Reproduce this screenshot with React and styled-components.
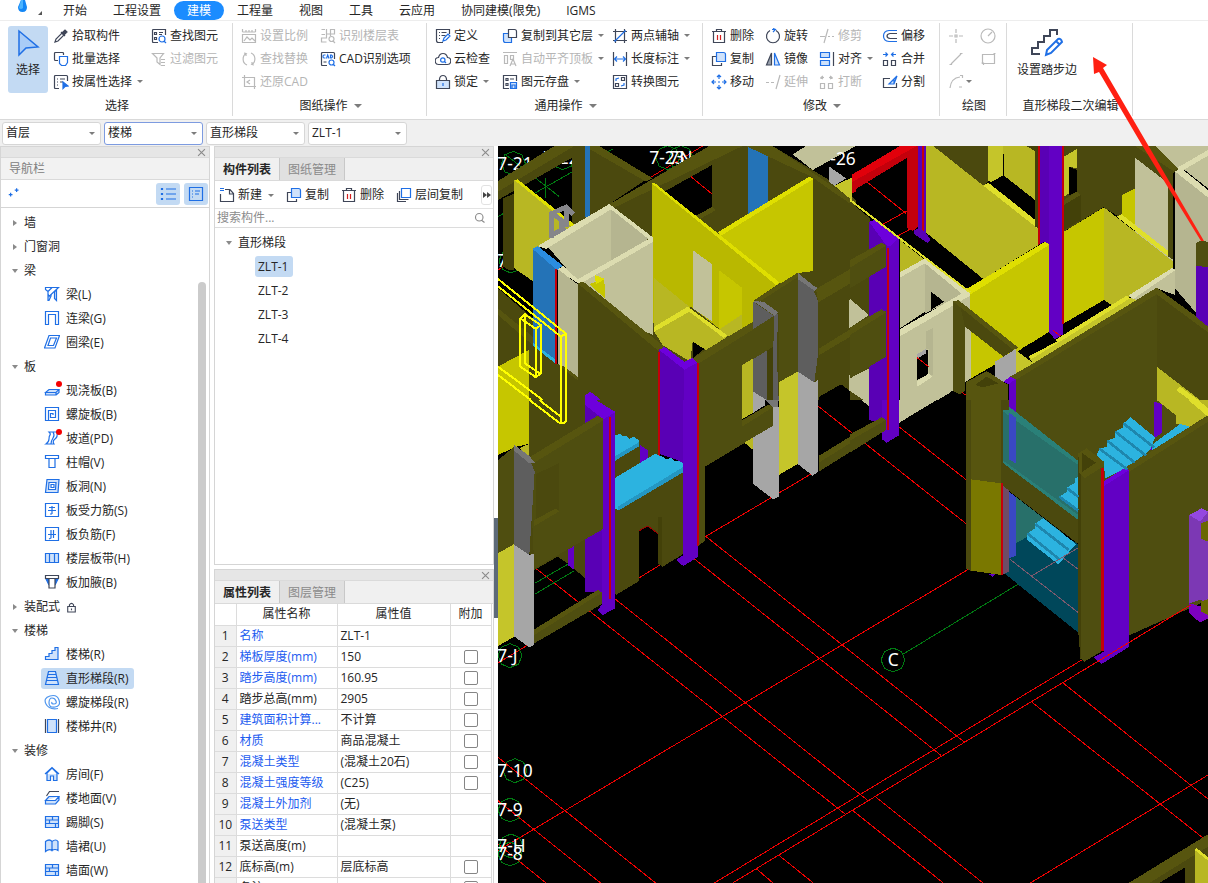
// App.jsx
import { useState } from 'react';
import styled, { createGlobalStyle } from 'styled-components';

const INK = '#3f4658';
const BLUE = '#1f6fe5';
const PALE = '#cfe2fb';
const OFF = '#b9b9b9';

const GlobalStyle = createGlobalStyle`
  * { box-sizing: border-box; }
  body {
    margin: 0;
    background: #fff;
    color: #262626;
    font-family: "Open Sans", "Noto Sans CJK SC", sans-serif;
    font-size: 12px;
    line-height: 16px;
  }
  button, input, select {
    font: inherit;
    color: inherit;
    margin: 0;
  }
  button {
    border: none;
    background: none;
    padding: 0;
    white-space: nowrap;
  }
`;

const Shell = styled.div`
  position: relative;
  height: 100vh;
  display: flex;
  flex-direction: column;
  overflow: hidden;
`;

/* ---------- menu ---------- */

const MenuBar = styled.nav`
  display: flex;
  align-items: flex-end;
  height: 21px;
  flex: none;
  border-bottom: 1px solid #ededed;
`;

const AppMark = styled.div`
  display: flex;
  align-items: flex-start;
  gap: 8px;
  width: 50px;
  height: 20px;
  padding-left: 16px;
`;

const MenuTab = styled.button`
  height: 19px;
  padding: 1px 13px 0;
  border-radius: 10px;
  background: ${(props) => (props.$active ? '#1b8cff' : 'none')};
  color: ${(props) => (props.$active ? '#fff' : '#262626')};
`;

/* ---------- ribbon ---------- */

const Ribbon = styled.div`
  display: flex;
  flex: none;
  height: 99px;
  padding-top: 2px;
  border-bottom: 1px solid #d9d9d9;
`;

const Group = styled.section`
  display: flex;
  flex-direction: column;
  flex: none;
  width: ${(props) => props.$w}px;
  height: 93px;
  padding: 1px 0 0 8px;
  border-right: 1px solid #dadada;
`;

const GroupBody = styled.div`
  display: flex;
  flex: 1;
`;

const GroupTitle = styled.div`
  display: flex;
  justify-content: center;
  align-items: center;
  gap: 4px;
  height: 20px;
  padding-right: 6px;
  white-space: nowrap;
`;

const ToolColumn = styled.div`
  display: flex;
  flex-direction: column;
  flex: none;
  width: ${(props) => props.$w}px;
`;

const Tool = styled.button`
  display: flex;
  align-items: center;
  gap: 3px;
  height: 23px;
  color: ${(props) => (props.disabled ? '#b5b5b5' : '#262626')};
`;

const Caret = styled.i`
  flex: none;
  border: ${(props) => (props.$large ? 4 : 3)}px solid transparent;
  border-top-color: #7c7c7c;
  border-bottom: none;
  margin-left: ${(props) => props.$gap || 2}px;
`;

const BigTool = styled.button`
  display: flex;
  flex-direction: column;
  align-items: center;
  gap: 5px;
  width: ${(props) => props.$w}px;
  height: 67px;
  margin: 2px 5px 0 0;
  padding-top: 3px;
  border-radius: 3px;
  background: ${(props) => (props.$active ? '#c3daf3' : 'none')};
`;

/* ---------- option row ---------- */

const OptionRow = styled.div`
  display: flex;
  align-items: center;
  gap: 3px;
  flex: none;
  height: 26px;
  padding-left: 2px;
  background: #f0f0f0;
`;

const SelectBox = styled.label`
  display: flex;
  align-items: center;
  width: 99px;
  height: 23px;
  padding-right: 5px;
  border: 1px solid ${(props) => (props.$focus ? '#7d9be0' : '#d6d6d6')};
  border-radius: 3px;
  background: #fff;

  select {
    appearance: none;
    flex: 1;
    min-width: 0;
    border: none;
    outline: none;
    background: none;
    padding: 0 3px;
  }
`;

/* ---------- panels ---------- */

const Workspace = styled.main`
  display: flex;
  flex: 1;
  min-height: 0;
`;

const NavPanel = styled.aside`
  display: flex;
  flex-direction: column;
  flex: none;
  width: 210px;
  margin-right: 4px;
  border: solid #d5d5d5;
  border-width: 1px 1px 0;
`;

const Strip = styled.div`
  display: flex;
  justify-content: flex-end;
  align-items: center;
  flex: none;
  height: 11px;
  padding-right: 2px;
  background: #e6e6e6;
  border-bottom: 1px solid #dadada;

  button { display: flex; }
`;

const NavTitle = styled.div`
  flex: none;
  height: 22px;
  padding: 3px 8px;
  background: #f2f2f2;
  border-bottom: 1px solid #dadada;
  color: #808080;
`;

const NavTools = styled.div`
  display: flex;
  align-items: center;
  gap: 4px;
  flex: none;
  height: 28px;
  padding: 0 1px 0 7px;
  border-bottom: 1px solid #d5d5d5;

  button:first-child { margin-right: auto; }
`;

const Toggle = styled.button`
  display: flex;
  align-items: center;
  justify-content: center;
  width: 24px;
  height: 22px;
  border-radius: 3px;
  background: #c3daf3;
`;

const NavBody = styled.div`
  display: flex;
  flex: 1;
  min-height: 0;
  padding: 3px 3px 0 0;
`;

const Tree = styled.ul`
  flex: 1;
  margin: 0;
  padding: 0;
  list-style: none;
  overflow: hidden;

  ul {
    margin: 0;
    padding: 0 0 0 40px;
    list-style: none;
  }

  li {
    display: flex;
    flex-direction: column;
    align-items: flex-start;
  }
`;

const ScrollThumb = styled.div`
  flex: none;
  width: 8px;
  margin-top: 71px;
  border-radius: 4px 4px 0 0;
  background: #cbcbcb;
`;

const Branch = styled.button`
  display: flex;
  align-items: center;
  gap: 6px;
  height: 24px;
  padding-left: ${(props) => props.$indent || 10}px;
`;

const Twist = styled.i`
  flex: none;
  width: 7px;
  display: flex;
  justify-content: center;

  &::after {
    content: '';
    border: 3px solid transparent;
    ${(props) =>
      props.$open
        ? 'border-top: 4px solid #8a8a8a; border-bottom: none;'
        : 'border-left: 4px solid #8a8a8a; border-right: none;'}
  }
`;

const Leaf = styled.button`
  display: flex;
  align-items: center;
  gap: 6px;
  height: 21px;
  margin: 1px 0 2px;
  padding: 0 5px 0 3px;
  border-radius: 3px;
  background: ${(props) => (props.$active ? '#c3daf3' : 'none')};
`;

const Side = styled.div`
  display: flex;
  flex-direction: column;
  flex: none;
  gap: 4px;
  width: 280px;
`;

const Panel = styled.section`
  display: flex;
  flex-direction: column;
  flex: ${(props) => (props.$fixed ? `0 0 ${props.$fixed}px` : '1 1 0')};
  min-height: 0;
  overflow: hidden;
  border: 1px solid #d5d5d5;
  border-bottom-width: ${(props) => (props.$fixed ? '1px' : '0')};
`;

const Tabs = styled.div`
  display: flex;
  flex: none;
  height: 23px;
  background: #f0f0f0;
  border-bottom: 1px solid #dadada;
`;

const PanelTab = styled.button`
  width: 65px;
  height: 22px;
  padding-top: 1px;
  border-right: 1px solid #c8c8c8;
  background: ${(props) => (props.$active ? '#f0f0f0' : '#e0e0e0')};
  color: ${(props) => (props.$active ? '#262626' : '#8a8a8a')};
  font-weight: ${(props) => (props.$active ? 700 : 400)};
`;

const ListTools = styled.div`
  display: flex;
  align-items: center;
  gap: 12px;
  flex: none;
  height: 28px;
  padding: 1px 1px 0 4px;
  border-bottom: 1px solid #e3e3e3;
`;

const MoreButton = styled.button`
  flex: none;
  width: 11px;
  height: 20px;
  margin-left: auto;
  border: 1px solid #e2e2e2;
  border-radius: 3px;
  display: flex;
  align-items: center;
  justify-content: center;
`;

const SearchRow = styled.label`
  display: flex;
  align-items: center;
  flex: none;
  height: 19px;
  padding: 0 7px 0 2px;
  border-bottom: 1px solid #dcdcdc;

  input {
    flex: 1;
    min-width: 0;
    padding: 0;
    border: none;
    outline: none;
    background: none;
  }
  input::placeholder { color: #8c8c8c; opacity: 1; }
`;

const PartList = styled(Tree)`
  padding-top: 3px;
`;

const Table = styled.table`
  table-layout: fixed;
  flex: none;
  width: 276px;
  border-collapse: collapse;

  th, td {
    height: 21px;
    padding: 0 3px;
    border: 1px solid #dcdcdc;
    border-top: none;
    font-weight: 400;
    text-align: left;
    line-height: 20px;
    white-space: nowrap;
    overflow: hidden;
    text-overflow: ellipsis;
  }
  thead th { text-align: center; }
  tbody th {
    padding: 0;
    background: #f0f0f0;
    text-align: center;
  }
  th:first-child { border-left: none; }
  td:last-child { text-align: center; }
`;

const PropName = styled.td`
  color: ${(props) => (props.$link ? '#1c5cf0' : '#262626')};
`;

const Check = styled.input`
  appearance: none;
  display: block;
  width: 14px;
  height: 14px;
  border: 1px solid #858585;
  border-radius: 2px;
  background: #fff;

  && { margin: 0 auto; }
`;

const Splitter = styled.div`
  flex: none;
  width: 4px;
  padding-top: 372px;

  button {
    display: block;
    width: 4px;
    height: 100px;
    background: #5d6a78;
  }
`;

const Viewport = styled.div`
  flex: 1;
  min-width: 0;
  background: #000;

  svg {
    display: block;
    width: 100%;
    height: 100%;
  }
`;

const Pointer = styled.svg`
  position: absolute;
  top: 50px;
  left: 1088px;
  pointer-events: none;
`;

/* ---------- icons: [path, stroke, fill] on a 16px grid ---------- */

const ICONS = {
  dropper: [['M2 14l1-3 6-6 2 2-6 6z', INK, '#fff'], ['M8 4l4 4M9 5l3-3 2 2-3 3z', INK, INK]],
  batch: [['M10.5 4V2.500q0-1-1-1h-7q-1 0-1 1v6q0 1 1 1H5', INK], ['M6.500 5.500h8v6l-2 3h-4l-2-2z', BLUE, '#fff']],
  byProp: [['M6 14.500H2.500q-1 0-1-1v-11q0-1 1-1h11q1 0 1 1V7M4 5h1M7 5h5M4 8h1M7 8h3M4 11h1', INK], ['M10 8l5 4-3 .500-2 2z', BLUE, BLUE]],
  find: [['M7 14.500H2.500q-1 0-1-1v-11q0-1 1-1h12V7M3.500 4.500h2v2h-2zM8 4.500h4M8 6.500h3M3.500 9.500h2v2h-2z', INK], ['M14 11a3 3 0 1 1-6 0 3 3 0 0 1 6 0M13 13l2 2', BLUE, '#fff']],
  filter: [['M1.500 2.500h11L9 7v6.500L6 11V7zM10 8.500h4M10 11.500h4M10 14.500h4', OFF]],
  scale: [['M1.500 1v3M5 2v2M8 2v2M11 2v2M14.500 1v3M1.500 4h13M1.500 6.500h13v8h-13zM3 13l3-4 3 3 2-2 3 3', OFF]],
  swap: [['M6 14C1 12 1 5 5 2.500L3 2M5 2.500L5 5M10 2c5 2 5 9 1 11.500l2 .500M11 13.500L11 11', OFF]],
  restore: [['M3.500 1v11.500H15M1 3.500h12.500V15M9 6L6 8l3 2', OFF]],
  floors: [['M5 1.500H1.500M5 6.500H1.500M6.500 1v9h-5v4h5M6.500 6h8V1.500h-4V8', OFF], ['M14 11a2.500 2.500 0 1 1-5 0 2.500 2.500 0 0 1 5 0M13 13l2 2', OFF]],
  cad: [['M7 14.500H2.500q-1 0-1-1v-11q0-1 1-1h11q1 0 1 1V8M3.500 11h3', INK], ['M5.500 4H4q-1 0-1 1.500T4 7h1.500M6.500 7.500l1.200-3.500L9 7.500M10.500 4v3h1q2-1.500 0-3zM14 11.500a2.500 2.500 0 1 1-5 0 2.500 2.500 0 0 1 5 0M13 13l2 2', BLUE]],
  define: [['M8 14.500H3.500q-2 0-2-2v-11h13V6M4 4.500h1M6.500 4.500h5M4 7.500h1M6.500 7.500h4M4 10.500h1', INK], ['M8 13l1-3 4-4 2 2-4 4z', BLUE, '#fff']],
  cloud: [['M4 13.500a3.500 3.500 0 0 1-.500-7Q4.500 2.500 8 2.500t4.500 4a3.500 3.500 0 0 1-.500 7z', INK], ['M10 9a2.200 2.200 0 1 1-4.400 0 2.200 2.200 0 0 1 4.400 0M9.500 10.500L11 12', BLUE]],
  lock: [['M4.500 6.500V5Q5 1.500 8 1.500T11.500 5v1.500', INK], ['M1.500 6.500h13v8h-13z', INK, PALE], ['M8 9v3', BLUE, BLUE]],
  copyTo: [['M1.500 5.500h8v9h-6q-2 0-2-2z', BLUE, PALE], ['M6.500 1.500h6q2 0 2 2v6h-8z', INK, '#fff']],
  alignTop: [['M1 1.500h14M2.500 4.500h3v8h-3zM8.500 4.500h3v4h-3zM8 15l3-7 3 7M9 13h4', OFF]],
  save: [['M7 14.500H1.500v-13h13V7M4 4.500h2v2H4zM4 9.500h2v2H4zM8 5h4', INK], ['M8.500 8.500h6v6h-6zM10 14v-3h3v3', BLUE, PALE]],
  axis: [['M3.500 1v14M12.500 1v14M1 3.500h14M1 12.500h14', INK], ['M3 13L13 3M2 13h2M12 3h2', BLUE]],
  measure: [['M1.500 1v14M14.500 1v14', INK], ['M2 8h12M5 5.500L2.500 8 5 10.500M11 5.500L13.500 8 11 10.500', BLUE]],
  convert: [['M1.500 1.500h13v13h-13zM9.500 3.500h3v3h-3zM3.500 9.500h3v3h-3z', INK], ['M7 4L4 5v2M9 12l3-1V9', BLUE]],
  trash: [['M1 3.500h14M2.500 4v10.500h11V4M5.500 3V1.500h5V3', INK], ['M6.500 7v5M9.500 7v5', '#d32020']],
  rotate: [['M5 2.500A6.500 6.500 0 1 0 11 2.500', INK], ['M7 1.500h3M8 .500l2.500 1L8 4', BLUE]],
  trim: [['M1 8.500h5M9 1L5 15M9 8.500h2M13 8.500h2', OFF]],
  offset: [['M15 2.500H7Q1.500 3 1.500 8T7 13.500h8', BLUE], ['M15 5.500H8Q5 6 5 8t3 2.500h7', INK]],
  copy: [['M5 5.500H1.500v9h9V12', INK], ['M5.500 1.500h7q2 0 2 2v7h-9z', BLUE, PALE]],
  mirror: [['M6.500 2v12h-5z', INK, '#9aa1ad'], ['M9.500 2v12h5z', BLUE, PALE]],
  align: [['M1.500 1.500h9v5h-9zM1.500 9.500h9v5h-9z', BLUE, PALE], ['M14.500 1v14', INK]],
  merge: [['M1.500 9.500h4v5h-4zM9.500 9.500h4v5h-4z', INK], ['M1 3.500h4M3.500 1.500l2 2-2 2M14 3.500h-4M11.500 1.500l-2 2 2 2', BLUE]],
  move: [['M8 1v4M8 11v4M1 8h4M11 8h4M6 3l2-2 2 2M6 13l2 2 2-2M3 6L1 8l2 2M13 6l2 2-2 2M7 8h2', BLUE]],
  extend: [['M1 8.500h3M6 8.500h3M15 1l-4 14', OFF]],
  breakUp: [['M1.500 9.500h4v5h-4zM9.500 9.500h4v5h-4zM2 5V3.500h3M4 2l-2 1.500L4 5M13 5V3.500h-3M11 2l2 1.500L11 5', OFF]],
  split: [['M8 4.500H1.500v9h13V9', INK], ['M15 2L7 10h5zM12 10v-5', BLUE, PALE]],
  point: [['M8 1v4M8 11v4M1 8h4M11 8h4M7 7h2v2H7z', OFF]],
  circle: [['M15 8A7 7 0 1 1 1 8a7 7 0 0 1 14 0M8 8l4-4', OFF]],
  line: [['M3 13L13 3M1.500 13.500h2v-1M14.500 2.500h-2v1', OFF]],
  rect: [['M2.500 3.500h12v9h-12zM1.500 12h2v2M13.500 2.500h2', OFF]],
  arc: [['M2 14Q3 4 12 3M12 1.500h2.500V4M11 13h3', OFF]],
  create: [['M6 2.500h5l3.500 4v8h-13V7M10.500 3v4H14', INK], ['M1 1.500h4M1 3.500h4', BLUE]],
  copyFloor: [['M1.500 6v8.500H10M3.500 4v8.500h9', INK], ['M5.500 1.500h9v9h-9z', BLUE, '#fff']],
  plus: [['M3.500 9v5M1 11.500h5M11.500 3v5M9 5.500h5', BLUE]],
  list: [['M1.500 2.500h1v1h-1zM1.500 7.500h1v1h-1zM1.500 12.500h1v1h-1zM6 3h10M6 8h10M6 13h10', BLUE]],
  card: [['M1.500 1.500h13v13h-13zM4 5h1M7 5h5M4 8h1M7 8h4M4 11h1', BLUE]],
  beam: [['M10.500 5.500l2-1v10l-2-2zM4 9l3-3v4l-2 4.500h-1z', BLUE, PALE], ['M1.500 1.500h13L5 10.500 4 8V5.500L1.500 3.500zM4 5.500l4-4', BLUE, '#fff']],
  linkBeam: [['M1.500 14.500v-13h13v13h-3v-10h-7v10z', BLUE]],
  ringBeam: [['M5 1.500h10.500L11 14H.500zM6.500 4h6L9.500 11.500H4z', BLUE, '#fff']],
  slab: [['M5 7.500h10l-3 3H1.500zM1.500 10.500v2.500H12v-2.500M12 13l3-2.500v-3', BLUE, PALE]],
  spiral: [['M1.500 14.500v-13h13v13zM4.500 14v-9.500h7v7h-5v-4h2.500v1.500', BLUE]],
  ramp: [['M5 2h8q1 5-2 7t-1 5H2q3-2 3-5t1-4-1-3z', BLUE, '#fff'], ['M9 2q2 3 0 6t-2 6', BLUE]],
  cap: [['M1.500 1.500h13v3h-3.500v9H5v-9H1.500zM4 4.500h8', BLUE]],
  hole: [['M3 1.500h12l-1 13H1.500z', BLUE, PALE], ['M5 4.500h7l-.500 7H4.500zM7 6.500h3v3H7z', BLUE, '#fff']],
  bar1: [['M1.500 1.500h13v13h-13zM5 5.500h6M4 8.500h8M8 4v8M6 12h2', BLUE]],
  bar2: [['M1.500 1.500h13v13h-13zM4 8.500h8M7 4v8l-2 1M9.500 4v8', BLUE]],
  strip: [['M1.500 3.500h13v9h-13zM5.500 4v8M10.500 4v8', BLUE, PALE]],
  haunch: [['M2 5l3 6V5zM14 5l-3 6V5z', BLUE, BLUE], ['M1.500 1.500h13v3h-13zM5 5v9h6V5', INK, '#fff']],
  stair: [['M1.500 13.500v-3h3.500V7.500h3V4.500h3v-3h3v12z', BLUE, PALE]],
  flight: [['M4.500 1.500h7l3 13h-13zM4 4.500h8M3.500 7.500h9M2.500 10.500h11', BLUE, PALE]],
  helix: [['M14 14.500Q5 16 2 10T6 2t9 4-4 7-6-4 3-5 4 3-2 3-2-2', '#4f96ee']],
  well: [['M1.500 1v14M14.500 1v14', INK], ['M3.500 1.500h9v13h-9z', BLUE, PALE]],
  house: [['M1 8l7-6.500L15 8M3 7v7.500h3.500V10h3v4.500H13V7L8 2z', BLUE, PALE]],
  floor: [['M2.500 6l3-4.500H15', INK], ['M5 6.500h10l-3.500 4H1.500zM1.500 10.500v3.500h10l3.500-4V6.500', BLUE, PALE]],
  brick: [['M1.500 2.500h13v11h-13z', BLUE, PALE], ['M1.500 6h13M1.500 9.500h13M8.500 2.500V6M5.500 6v3.500M11.500 9.500v4', BLUE]],
  skirt: [['M1.500 3.500q4-3 6.500 0v9q-3-2-6.500 1zM8 3.500q4-3 6 0v9q-3-2-6 0z', BLUE, PALE]],
  padlock: [['M2.500 6.500h11v8h-11zM5 6V4q3-4 6 0v2M8 9.500V12', INK]],
  search: [['M12 7A5 5 0 1 1 2 7a5 5 0 0 1 10 0M10 11l4 3', '#8a8a8a']],
  close: [['M3 3l10 10M13 3L3 13', '#8a8a8a']],
};

function Icon({ name, size = 16, width = 1.2 }) {
  return (
    <svg width={size} height={size} viewBox="0 0 16 16" fill="none" strokeWidth={width} style={{ flex: 'none' }} aria-hidden="true">
      {ICONS[name].map(([d, stroke, fill]) => (
        <path key={d} d={d} stroke={stroke} fill={fill || 'none'} />
      ))}
    </svg>
  );
}

/* ---------- data ---------- */

const MENU = ['开始', '工程设置', '建模', '工程量', '视图', '工具', '云应用', '协同建模(限免)', 'IGMS'];

// [icon, label, disabled, caret]
const GROUPS = [
  {
    title: '选择', w: 233, big: true,
    columns: [
      [98, [['dropper', '拾取构件'], ['batch', '批量选择'], ['byProp', '按属性选择', false, true]]],
      [80, [['find', '查找图元'], ['filter', '过滤图元', true]]],
    ],
  },
  {
    title: '图纸操作', w: 194, caret: true,
    columns: [
      [79, [['scale', '设置比例', true], ['swap', '查找替换', true], ['restore', '还原CAD', true]]],
      [100, [['floors', '识别楼层表', true], ['cad', 'CAD识别选项']]],
    ],
  },
  {
    title: '通用操作', w: 276, caret: true,
    columns: [
      [67, [['define', '定义'], ['cloud', '云检查'], ['lock', '锁定', false, true]]],
      [110, [['copyTo', '复制到其它层', false, true], ['alignTop', '自动平齐顶板', true, true], ['save', '图元存盘', false, true]]],
      [80, [['axis', '两点辅轴', false, true], ['measure', '长度标注', false, true], ['convert', '转换图元']]],
    ],
  },
  {
    title: '修改', w: 237, caret: true,
    columns: [
      [54, [['trash', '删除'], ['copy', '复制'], ['move', '移动']]],
      [54, [['rotate', '旋转'], ['mirror', '镜像'], ['extend', '延伸', true]]],
      [63, [['trim', '修剪', true], ['align', '对齐', false, true], ['breakUp', '打断', true]]],
      [50, [['offset', '偏移'], ['merge', '合并'], ['split', '分割']]],
    ],
  },
  {
    title: '绘图', w: 67,
    columns: [
      [32, [['point', ''], ['line', ''], ['arc', '', true, true]]],
      [20, [['circle', ''], ['rect', '']]],
    ],
  },
];

const SELECTS = ['首层', '楼梯', '直形梯段', 'ZLT-1'];

const NAV = [
  { label: '墙' },
  { label: '门窗洞' },
  { label: '梁', items: [['beam', '梁(L)'], ['linkBeam', '连梁(G)'], ['ringBeam', '圈梁(E)']] },
  {
    label: '板',
    items: [
      ['slab', '现浇板(B)', true], ['spiral', '螺旋板(B)'], ['ramp', '坡道(PD)', true], ['cap', '柱帽(V)'],
      ['hole', '板洞(N)'], ['bar1', '板受力筋(S)'], ['bar2', '板负筋(F)'], ['strip', '楼层板带(H)'], ['haunch', '板加腋(B)'],
    ],
  },
  { label: '装配式', locked: true },
  { label: '楼梯', items: [['stair', '楼梯(R)'], ['flight', '直形梯段(R)'], ['helix', '螺旋梯段(R)'], ['well', '楼梯井(R)']] },
  { label: '装修', items: [['house', '房间(F)'], ['floor', '楼地面(V)'], ['brick', '踢脚(S)'], ['skirt', '墙裙(U)'], ['brick', '墙面(W)']] },
];

// [name, value, editable, has check box]
const PROPS = [
  ['名称', 'ZLT-1', true, false],
  ['梯板厚度(mm)', '150', true, true],
  ['踏步高度(mm)', '160.95', true, true],
  ['踏步总高(mm)', '2905', false, true],
  ['建筑面积计算...', '不计算', true, true],
  ['材质', '商品混凝土', true, true],
  ['混凝土类型', '(混凝土20石)', true, true],
  ['混凝土强度等级', '(C25)', true, true],
  ['混凝土外加剂', '(无)', true, false],
  ['泵送类型', '(混凝土泵)', true, false],
  ['泵送高度(m)', '', false, false],
  ['底标高(m)', '层底标高', false, true],
  ['备注', '', false, true],
];

/* ---------- 3D view ---------- */

const C = {
  k: '#000', d: '#4b490e', e: '#434109', o: '#57550f', f: '#4f4e10',
  y: '#c6c600', g: '#b9b800', m: '#b8b723', n: '#c5c52a', t: '#dfdf00', u: '#dfdf2b',
  b: '#c1c199', c: '#b5b590', w: '#dcdcb0',
  p: '#6200c4', q: '#5900b5', v: '#6d00dc', r: '#c4000b', s: '#e1000b',
  a: '#a6a6a6', h: '#5e5e5e', i: '#767676', l: '#2473b7', j: '#2b8de0',
  x: '#2cb3e0', z: '#2497c2', teal: '#28706a', teal2: '#2a8078', deep: '#00475a', stripe: '#3a48c4',
};

const NORTH_WEST = [
  ['d', '6,108 175,3 300,3 458,98 340,178 340,300 200,300 228,230 228,38 6,165'],
  ['o', '6,108 175,3 235,3 6,140'],
  ['o', '265,3 310,3 470,100 450,110'],
  ['l', '267,3 283,3 283,215 267,215'],
  ['e', '22,160 55,145 55,375 38,375 22,365'],
  ['m', '55,105 230,240 200,290 110,310 110,408 55,370'],
  ['t', '55,105 65,103 235,238 228,246'],
  ['d', '340,178 690,3 900,3 1080,165 1080,765 245,765 245,300'],
  ['k', '487,150 648,60 648,190 600,215 560,190'],
  ['o', '340,178 640,3 740,3 350,190'],
  ['o', '600,212 648,186 660,195 612,222'],
  ['l', '755,3 815,3 815,180 755,212'],
  ['k', '830,3 1080,3 1080,165 1000,105'],
  ['o', '750,3 830,3 1080,170 1080,190 950,97'],
  ['b', '890,28 930,3 1080,3 950,75'],
  ['a', '1000,65 1050,100 1015,122 1000,112'],
  ['n', '1015,122 1067,98 1067,165'],
  ['r', '1067,90 1080,80 1080,140 1067,145'],
  ['g', '467,115 850,415 775,465 775,560 700,575 585,485 475,550 467,500'],
  ['m', '475,400 580,485 475,550'],
  ['y', '665,270 950,100 950,378 850,415'],
  ['t', '665,262 940,95 952,102 675,272'],
  ['t', '467,115 475,113 850,412 840,420'],
  ['b', '590,315 647,357 647,528 590,490'],
  ['y', '668,375 738,428 738,510 668,555'],
  ['m', '668,555 738,508 738,555 700,575'],
  ['m', '475,560 580,500 695,575 630,615 590,590 583,650 500,600'],
  ['u', '475,545 575,485 695,572 682,578 580,500 475,560'],
  ['k', '590,590 625,612 590,640'],
  ['d', '952,100 1080,188 1080,765 900,765 900,385 952,378'],
  ['b', '155,305 345,190 345,350 245,410'],
  ['c', '345,190 460,280 345,350'],
  ['b', '245,418 472,282 472,570 400,540'],
  ['w', '125,303 340,177 472,278 472,290 250,418 185,375 200,362 245,403 458,282 345,193 150,312'],
  ['c', '185,372 245,418 245,708 185,660'],
  ['y', '280,418 325,400 327,460'],
  ['t', '296,390 327,402 300,418'],
  ['k', '6,375 110,408 110,500 6,400'],
  ['d', '6,430 110,520 110,600 245,705 245,765 6,765'],
  ['o', '180,655 200,662 340,765 320,765'],
  ['o', '6,490 110,575 110,600 6,510'],
  ['y', '6,665 98,615 98,765 6,765'],
  ['l', '110,310 180,370 180,655 110,600'],
  ['j', '110,312 125,303 200,362 183,375'],
  ['x', '110,592 180,645 180,657 110,602'],
  ['r', '177,372 183,372 183,658 177,655'],
  ['d', '245,415 490,620 490,765 245,765'],
  ['o', '245,415 262,410 505,605 490,620'],
  ['q', '490,612 565,672 565,765 490,765'],
  ['p', '565,672 607,650 607,765 565,765'],
  ['v', '490,615 505,605 565,650 592,638 607,652 565,674'],
  ['r', '485,622 491,622 491,765 485,765'],
  ['f', '607,655 835,510 835,765 607,765'],
  ['o', '590,640 820,500 845,508 607,656'],
  ['r', '603,655 609,655 609,765 603,765'],
  ['m', '738,660 772,640 772,765 738,765'],
  ['f', '775,465 905,385 905,680 848,712 848,505 802,470'],
  ['h', '772,470 830,510 847,505 842,620 848,765 812,765 772,740'],
  ['f', '772,552 835,512 832,605 772,642'],
  ['h', '772,470 832,512 772,552'],
  ['e', '812,618 832,605 832,765 812,765'],
  ['a', '772,740 812,765 772,765'],
  ['i', '772,468 802,470 847,502 835,512'],
  ['o', '775,465 905,383 912,392 790,470'],
  ['n', '848,712 905,680 905,765 848,765'],
  ['h', '905,385 950,430 967,470 967,620 955,712 905,680'],
  ['i', '905,383 952,422 967,430 955,437 905,402'],
  ['a', '905,680 955,712 967,705 967,765 905,765'],
  ['o', '960,432 1080,362 1080,405 967,472'],
  ['b', '1060,465 1080,475 1080,545 1060,550'],
  ['o', '970,610 1080,542 1080,565 970,630'],
  ['b', '1060,690 1080,680 1080,750 1060,740'],
  ['k', '970,755 1035,718 1065,740 1065,765 970,765'],
  ['v', '268,750 283,740 315,765 268,765'],
];

const NORTH_EAST = [
  ['r', '5,95 165,3 205,3 205,245 188,258 172,250 172,38 5,140'],
  ['s', '5,90 150,3 200,3 5,112'],
  ['d', '0,170 60,220 60,765 0,765'],
  ['q', '205,3 227,3 227,262 242,285 232,294 193,268 193,255 205,250'],
  ['r', '217,3 222,3 222,258 217,255'],
  ['m', '227,3 250,3 565,250 565,300 400,402 227,262'],
  ['d', '250,3 415,3 415,108 400,122'],
  ['n', '415,3 460,3 460,90 425,112 415,108'],
  ['m', '460,3 530,3 555,18 555,165 462,92'],
  ['k', '425,110 462,92 555,165 555,225'],
  ['u', '400,122 415,113 565,232 565,252'],
  ['e', '530,3 565,3 565,250 555,245 555,18'],
  ['d', '642,3 855,3 855,135 815,150 815,220 760,187 642,260'],
  ['n', '642,35 680,12 680,70 657,65 657,145 642,155'],
  ['k', '657,65 680,75 680,140 657,152'],
  ['o', '642,165 680,140 692,150 642,180'],
  ['e', '642,180 692,150 692,225 642,255'],
  ['b', '855,38 970,120 970,365 855,275'],
  ['y', '817,150 855,130 855,250 817,222'],
  ['y', '642,260 762,187 762,465 642,535'],
  ['m', '762,187 970,350 970,372 840,455 785,480 762,465'],
  ['u', '800,215 815,208 955,318 955,335'],
  ['b', '900,3 1074,3 1074,20 980,72'],
  ['c', '975,75 1074,150 1074,545 975,430'],
  ['b', '1000,72 1074,25 1074,130'],
  ['w', '970,75 1074,15 1074,32 1000,75 1074,135 1074,158'],
  ['d', '855,3 905,3 985,72 970,85 970,345 955,335 955,115 855,38'],
  ['o', '855,3 915,3 985,70 970,78'],
  ['b', '840,460 975,372 975,450 920,430 860,465'],
  ['w', '835,452 968,368 975,376 850,462'],
  ['y', '360,440 598,300 598,560 515,612 360,702'],
  ['t', '345,435 585,290 600,298 360,449'],
  ['q', '565,3 600,3 600,300 585,290 565,300'],
  ['p', '598,3 640,3 640,568 600,592 578,578 598,565'],
  ['r', '564,3 570,3 570,298 564,300'],
  ['r', '636,3 642,3 642,538 636,538'],
  ['n', '535,635 838,458 860,465 550,657'],
  ['u', '535,635 830,452 840,460 545,642'],
  ['m', '150,285 225,345 150,390'],
  ['b', '150,390 225,345 225,500 150,550'],
  ['c', '225,350 345,440 280,478 225,505'],
  ['k', '243,440 282,470 243,495'],
  ['b', '150,560 360,445 360,700 310,735 270,765 150,765'],
  ['w', '150,382 225,340 360,440 360,452 150,574 150,552 335,446 225,355 150,398'],
  ['c', '228,560 250,548 250,690 236,690 236,612 228,612'],
  ['k', '200,640 235,612 235,690 200,705'],
  ['a', '200,628 228,612 228,625 200,642'],
  ['w', '200,710 236,685 248,695 200,726'],
  ['k', '150,830 310,738 360,705 430,665 430,765 205,765'],
  ['q', '57,230 110,270 110,765 57,765'],
  ['p', '110,300 148,278 148,765 110,765'],
  ['v', '57,230 75,225 148,275 120,305 108,300'],
  ['r', '111,310 117,310 117,765 111,765'],
  ['f', '0,350 95,295 108,300 108,365 0,430'],
  ['o', '0,345 95,293 108,302 0,368'],
  ['b', '0,462 57,510 0,548'],
  ['f', '0,550 95,495 108,500 108,635 0,700'],
  ['o', '0,548 95,493 108,502 0,570'],
  ['b', '0,700 57,670 57,765 40,765 0,738'],
  ['b', '345,545 362,555 362,700 345,712'],
  ['f', '310,468 345,495 345,738 330,748 310,738'],
  ['d', '330,480 500,610 460,635 345,545'],
  ['o', '310,470 325,465 505,608 490,615'],
  ['k', '512,612 598,562 620,590 540,632'],
  ['n', '493,612 550,655 498,690'],
  ['a', '435,650 498,612 498,690 460,710 435,700'],
  ['f', '495,700 920,430 920,765 495,765'],
  ['d', '920,440 1074,560 1074,765 920,765'],
  ['o', '480,695 550,655 920,428 1074,540 1074,562 920,448 495,706'],
  ['m', '920,665 1050,765 920,765'],
  ['u', '978,735 990,725 1045,765 1020,765'],
  ['o', '347,712 410,678 475,720 475,765 347,765'],
  ['e', '375,720 410,695 445,715 400,727'],
  ['v', '460,710 480,695 497,703 478,718'],
  ['p', '478,716 497,703 497,765 478,765'],
  ['q', '1037,360 1074,365 1074,545 1037,515'],
  ['f', '1037,295 1055,285 1074,292 1074,367 1037,362'],
];

const SOUTH_WEST = [
  ['d', '100,0 490,0 490,200 565,215 565,460 500,500 485,490 485,400 455,378 430,392 430,543 360,585 320,530 268,535 215,490 185,470 115,510 100,460 6,460 6,180 60,140 100,170'],
  ['y', '6,0 98,0 98,132 60,140 6,165'],
  ['m', '70,145 98,132 98,170'],
  ['f', '6,180 55,140 55,432 6,460'],
  ['f', '607,0 738,0 738,60 830,10 830,78 627,200 627,422 607,437'],
  ['m', '738,0 772,0 772,38 738,58'],
  ['o', '738,62 815,15 830,22 738,80'],
  ['m', '745,128 772,112 772,150'],
  ['a', '772,0 808,0 808,15 772,38'],
  ['a', '772,112 830,78 830,20 848,20 848,290 832,298 772,252'],
  ['i', '808,0 848,0 845,20 832,22'],
  ['n', '848,0 905,0 905,192 848,225'],
  ['a', '905,0 967,0 967,215 950,227 905,192'],
  ['f', '968,170 1062,112 1080,145 968,215'],
  ['o', '968,168 1062,110 1062,130 968,188'],
  ['p', '432,135 455,150 455,175 432,190'],
  ['x', '358,105 372,102 380,110 390,106 400,116 412,110 430,122 430,137 358,180'],
  ['z', '358,168 430,126 430,138 358,182'],
  ['x', '358,233 480,160 490,168 500,170 512,178 525,174 538,184 550,180 570,196 570,210 365,332 358,325'],
  ['z', '365,320 570,196 570,212 365,333'],
  ['q', '490,0 565,0 565,192 545,180 520,172 490,162'],
  ['p', '562,0 607,0 607,470 562,498 540,480 562,465'],
  ['r', '485,0 491,0 491,168 485,165'],
  ['r', '603,0 609,0 609,436 603,438'],
  ['e', '485,350 499,353 499,500 485,490'],
  ['p', '215,450 235,438 235,510 215,495'],
  ['q', '268,0 290,0 320,60 320,580 268,575'],
  ['p', '318,55 358,38 358,625 320,645 305,632 318,612'],
  ['v', '268,0 300,0 358,36 322,58 268,15'],
  ['f', '100,175 305,50 320,58 320,388 115,505'],
  ['o', '100,172 305,47 320,55 320,62 115,188'],
  ['d', '120,222 188,190 188,330 120,360'],
  ['o', '115,360 180,325 188,335 115,378'],
  ['r', '340,50 346,50 346,598 340,598'],
  ['h', '55,135 100,175 116,215 100,465 55,435'],
  ['i', '55,135 100,168 116,188 100,190 55,152'],
  ['a', '55,435 100,465 115,460 115,735 100,742 55,710'],
  ['n', '6,460 55,432 55,710 6,738'],
  ['f', '115,690 305,570 318,578 318,612 115,730'],
  ['o', '115,688 305,570 318,577 115,705'],
];

const SOUTH_EAST = [
  ['b', '35,0 57,0 57,20'],
  ['b', '148,0 260,0 148,68'],
  ['q', '57,0 110,0 110,75 57,60'],
  ['p', '96,0 148,0 148,105 110,128 96,118'],
  ['r', '111,0 117,0 117,90 111,90'],
  ['f', '0,105 95,53 108,60 108,90 0,158'],
  ['o', '0,103 95,52 108,60 0,122'],
  ['f', '475,0 1074,0 1074,600 840,705 685,640 685,432 475,270'],
  ['p', '477,0 497,0 497,40 477,30'],
  ['m', '920,0 1074,0 1074,45 1020,80 977,70 977,45'],
  ['u', '1015,0 1045,0 1074,25 1074,50'],
  ['p', '912,5 935,12 935,100 912,115'],
  ['p', '892,125 912,112 905,150 892,150'],
  ['teal', '460,25 685,190 685,360 460,188'],
  ['teal2', '460,25 480,22 685,183 685,195 460,35'],
  ['stripe', '477,38 497,52 497,190 477,178'],
  ['teal2', '460,182 685,345 685,360 460,190'],
  ['d', '460,190 685,360 685,432 460,260'],
  ['teal', '477,275 640,400 530,415 497,432 477,440'],
  ['deep', '463,520 477,440 530,412 570,370 685,432 685,698'],
  ['stripe', '477,275 497,290 497,468 477,475'],
  ['x', '740,165 750,145 772,140 772,122 796,112 796,95 820,82 820,70 842,52 915,112 900,150 830,205 765,235 762,190'],
  ['x', '905,135 990,72 1020,80 905,152'],
  ['x', '628,290 652,275 652,262 676,248 676,235 685,230 685,332'],
  ['x', '532,400 556,385 556,370 580,355 678,432 625,493 532,420'],
  ['f', '765,260 1074,50 1074,600 840,705 765,705'],
  ['o', '825,203 1074,48 1074,65 838,215'],
  ['o', '347,0 460,0 460,250 455,525 362,512 347,505'],
  ['d', '347,0 362,0 362,512 347,505'],
  ['d', '453,0 478,0 478,30 460,30 460,250 453,248'],
  ['p', '415,522 435,522 428,530'],
  ['p', '762,255 838,210 838,740 755,792 730,772 762,755'],
  ['v', '762,243 825,203 838,210 762,258'],
  ['f', '685,160 710,145 762,190 762,750 703,785 690,775'],
  ['e', '685,160 692,220 692,778 685,700'],
  ['o', '685,160 710,145 762,185 762,198 703,235 688,220'],
  ['e', '697,160 738,188 697,215'],
  ['r', '754,205 761,205 761,752 754,752'],
];

const SEAMS = [
  'M820 70l92 72M796 95l92 72M772 122l82 66M748 146l84 62',
  'M628 290l57 42M652 265l33 26M556 372l100 78M532 400l96 78',
];

const GRID = [
  'M6 2117L1417 1273', 'M655 2214L1757 1545', 'M710 2214L2084 1380', 'M1603 2214L2136 1890',
  'M122 1272L1047 2007', 'M355 1360L1115 1966', 'M568 1220L1335 1831', 'M628 1173L1405 1791',
  'M1606 1670L2121 2079', 'M1699 1612L2136 1962', 'M1071 1997L1342 2214', 'M1137 1954L1461 2214',
  'M782 2172L831 2214', 'M849 2131L952 2214', 'M6 1837L479 2214', 'M6 1967L314 2214', 'M6 2097L150 2214',
  'M6 1554L105 1494', 'M628 1175L945 987', 'M430 1298L492 1260', 'M966 783L1409 1135', 'M1202 840L1409 1003',
  'M1062 70L1230 205', 'M1157 240L1232 198', 'M1205 273L1250 248', 'M455 102L620 3', 'M1015 30L1062 68', 'M6 375L30 360',
];

// [label, circle x, circle y, text x]
const AXES = [
  ['7-21', 52, 55, 4], ['7-22', 200, 38, 142], ['7-23', 515, 38, 460], ['7N', 555, 38, 520], ['7-', 45, 348, 4],
  ['7-J', 42, 1532, 4], ['7-10', 57, 1877, 4], ['7-9', 42, 1995, 4], ['7-H', 45, 2103, 4], ['7-8', 42, 2127, 4],
  ['C', 1191, 1545, 1175],
];

function Faces({ list }) {
  return list.map(([tone, points], i) => <polygon key={i} fill={C[tone]} points={points} />);
}

function Ring({ x, y }) {
  const points = [];
  for (let i = 0; i < 8; i++) {
    const a = (Math.PI / 4) * i;
    points.push(`${x + 36 * Math.sin(a)},${y + 36 * Math.cos(a)}`);
  }
  return <polygon points={points.join(' ')} fill="none" stroke="#007a12" strokeWidth="3" />;
}

function Scene() {
  return (
    <svg viewBox="6 3 2130 2211" preserveAspectRatio="xMinYMin slice" shapeRendering="crispEdges" role="img" aria-label="3D">
      <path d={GRID.join('')} stroke="#f00000" strokeWidth="3" fill="none" />
      <path d="M30 30L190 155M80 165L350 12M148 100v60M6 215l20-12M116 1315l99-57M116 1348l119-71M1222 1527l385-234" stroke="#007a12" strokeWidth="3" fill="none" />
      {AXES.map(([label, x, y]) => <Ring key={label} x={x} y={y} />)}
      <g fill="#fff" fontFamily="'Noto Sans', sans-serif" fontSize="52">
        {AXES.map(([label, , y, tx]) => <text key={label} x={tx} y={y + 19}>{label}</text>)}
      </g>
      <svg x="0" y="0" width="1062" height="765">
        <Faces list={NORTH_WEST} />
        <path d="M585 95l63 52" stroke="#f00000" strokeWidth="3" />
        <path d="M166 278v-72l44-20 22 22M175 210l22 16v26M212 190v55M168 270l40-22" stroke="#86868a" strokeWidth="14" fill="none" />
        <path d="M6 402L210 566V765M6 424L194 574V765M194 574l16-8M73 520l14-12 47 32v145l-14 12-47-32zM120 550l14-8M120 552v142M87 510v145l47 32M73 520l47 32M6 665L140 765M6 690L105 765" stroke="#ffff00" strokeWidth="6" fill="none" />
      </svg>
      <svg x="1062" y="0" width="1074" height="765">
        <Faces list={NORTH_EAST} />
        <path d="M0 165L360 442" stroke={C.u} strokeWidth="6" />
        <path d="M200 637l36 28M608 555l24 18M336 742l10 8" stroke="#f00000" strokeWidth="3" />
      </svg>
      <text x="1003" y="59" fill="#fff" fontFamily="'Noto Sans', sans-serif" fontSize="52">-26</text>
      <svg x="0" y="765" width="1062" height="1449">
        <Faces list={SOUTH_WEST} />
        <path d="M430 392l25-14 30 22" stroke="#a00000" strokeWidth="3" fill="none" />
        <path d="M100 0l90 68q12 6 20-6V0M130 0l64 50V0M194 68V40" stroke="#ffff00" strokeWidth="6" fill="none" />
      </svg>
      <svg x="1062" y="765" width="1074" height="1449">
        <Faces list={SOUTH_EAST} />
        <path d={SEAMS.join('')} stroke="#1e86ad" strokeWidth="8" fill="none" />
        <polygon points="362,238 455,250 455,525 362,512" fill="#7a7800" />
        <polygon points="460,258 477,272 477,515 460,523" fill="#6e4c66" />
        <polygon points="453,248 460,248 460,525 453,525" fill={C.r} />
        <path d="M480 478l205 160M545 528l140-85M640 474l45 34" stroke="#7d5a6e" strokeWidth="3" />
        <polygon points="1018,345 1055,325 1074,335 1074,605 1050,600 1018,610" fill="#7c38b4" />
        <polygon points="1018,345 1055,325 1074,335 1050,365" fill="#9448e0" />
        <polygon points="1018,610 1074,625 1074,655 1050,668 1018,640" fill="#7d00c0" />
        <polygon points="1052,370 1074,362 1074,425 1052,415" fill="#6a6800" />
        <polygon points="1052,605 1074,597 1074,645 1052,635" fill="#6a6800" />
      </svg>
      <path d="M1757 1545l-30 18M2084 1380L1765 1574" stroke="#f00000" strokeWidth="3" />
      <polygon points="1898,2214 2136,2068 2136,2214" fill={C.o} />
      <polygon points="1960,2214 2136,2105 2136,2214" fill={C.d} />
      <polygon points="1990,2214 2066,2168 2066,2214" fill="#000" />
      <polygon points="2097,2110 2136,2140 2136,2214 2097,2214" fill={C.m} />
      <path d="M2099 2112l37 30" stroke={C.u} strokeWidth="8" />
    </svg>
  );
}

/* ---------- parts ---------- */

function CloseStrip() {
  return (
    <Strip>
      <button aria-label="close"><Icon name="close" size={11} width={1.600} /></button>
    </Strip>
  );
}

function RibbonGroup({ group }) {
  return (
    <Group $w={group.w}>
      <GroupBody>
        {group.big && (
          <BigTool $w={40} $active>
            <svg width="24" height="28" viewBox="0 0 24 28">
              <path d="M3 2v24l7-7 12-1z" fill="#a9ccf7" stroke={BLUE} strokeWidth="1.500" />
            </svg>
            选择
          </BigTool>
        )}
        {group.columns.map(([w, tools]) => (
          <ToolColumn key={tools[0][0]} $w={w}>
            {tools.map(([icon, label, disabled, caret]) => (
              <Tool key={icon} disabled={disabled} aria-label={label || icon}>
                <Icon name={icon} />
                {label}
                {caret && <Caret $gap={label ? 2 : -1} />}
              </Tool>
            ))}
          </ToolColumn>
        ))}
      </GroupBody>
      <GroupTitle>
        {group.title}
        {group.caret && <Caret $large />}
      </GroupTitle>
    </Group>
  );
}

function NavIcon({ name, dot }) {
  return (
    <svg width="16" height="18" viewBox="0 0 16 18" overflow="visible" style={{ flex: 'none' }}>
      <Icon name={name} />
      {dot && <circle cx="15" cy="2" r="3" fill="#f40000" />}
    </svg>
  );
}

export default function App() {
  const [current, setCurrent] = useState('直形梯段(R)');
  const [part, setPart] = useState('ZLT-1');

  return (
    <>
      <GlobalStyle />
      <Shell>
        <MenuBar>
          <AppMark>
            <svg width="13" height="14" viewBox="0 0 13 14">
              <path d="M5 0h4l2 7q0 5-4.500 5T2 7z" fill="#1487f5" />
              <path d="M5 0h2v8q-2 2-4 0z" fill="#4bb4ff" />
            </svg>
            <svg width="6" height="16" viewBox="0 0 6 16"><path d="M5 11v4H1z" fill="#555" /></svg>
          </AppMark>
          {MENU.map((item) => (
            <MenuTab key={item} $active={item === '建模'}>{item}</MenuTab>
          ))}
        </MenuBar>

        <Ribbon>
          {GROUPS.map((group) => <RibbonGroup key={group.title} group={group} />)}
          <Group $w={126}>
            <GroupBody>
              <BigTool $w={64}>
                <svg width="34" height="28" viewBox="0 0 34 28" fill="none" strokeWidth="2">
                  <path d="M10 25H2v-6h6v-6h6V7h6V1h7v5" stroke={INK} />
                  <path d="M16 26l1-5L28 10q3-1 4 3L21 24zM26 12l4 4" stroke={BLUE} />
                </svg>
                设置踏步边
              </BigTool>
            </GroupBody>
            <GroupTitle>直形梯段二次编辑</GroupTitle>
          </Group>
        </Ribbon>

        <OptionRow>
          {SELECTS.map((value, i) => (
            <SelectBox key={value} $focus={i === 1}>
              <select aria-label={value} defaultValue={value}>
                <option>{value}</option>
              </select>
              <Caret />
            </SelectBox>
          ))}
        </OptionRow>

        <Workspace>
          <NavPanel>
            <CloseStrip />
            <NavTitle>导航栏</NavTitle>
            <NavTools>
              <button aria-label="add"><Icon name="plus" size={12} width={1.600} /></button>
              <Toggle aria-label="list"><Icon name="list" /></Toggle>
              <Toggle aria-label="card"><Icon name="card" /></Toggle>
            </NavTools>
            <NavBody>
              <Tree>
                {NAV.map((branch) => (
                  <li key={branch.label}>
                    <Branch>
                      <Twist $open={!!branch.items} />
                      {branch.label}
                      {branch.locked && <Icon name="padlock" size={11} width={1.600} />}
                    </Branch>
                    {branch.items && (
                      <ul>
                        {branch.items.map(([icon, label, dot]) => (
                          <li key={label}>
                            <Leaf $active={label === current} onClick={() => setCurrent(label)}>
                              <NavIcon name={icon} dot={dot} />
                              {label}
                            </Leaf>
                          </li>
                        ))}
                      </ul>
                    )}
                  </li>
                ))}
              </Tree>
              <ScrollThumb />
            </NavBody>
          </NavPanel>

          <Side>
            <Panel $fixed={419}>
              <CloseStrip />
              <Tabs>
                <PanelTab $active>构件列表</PanelTab>
                <PanelTab>图纸管理</PanelTab>
              </Tabs>
              <ListTools>
                <Tool><Icon name="create" />新建<Caret $gap={3} /></Tool>
                <Tool><Icon name="copy" />复制</Tool>
                <Tool><Icon name="trash" />删除</Tool>
                <Tool><Icon name="copyFloor" />层间复制</Tool>
                <MoreButton aria-label="more">
                  <svg width="8" height="6" viewBox="0 0 8 6"><path d="M0 0l4 3-4 3zM4 0l4 3-4 3z" fill="#444" /></svg>
                </MoreButton>
              </ListTools>
              <SearchRow>
                <input placeholder="搜索构件..." aria-label="搜索构件" />
                <Icon name="search" size={12} width={1.500} />
              </SearchRow>
              <PartList>
                <li>
                  <Branch $indent={10}><Twist $open />直形梯段</Branch>
                  <ul>
                    {['ZLT-1', 'ZLT-2', 'ZLT-3', 'ZLT-4'].map((name) => (
                      <li key={name}>
                        <Leaf $active={name === part} onClick={() => setPart(name)}>{name}</Leaf>
                      </li>
                    ))}
                  </ul>
                </li>
              </PartList>
            </Panel>

            <Panel>
              <CloseStrip />
              <Tabs>
                <PanelTab $active>属性列表</PanelTab>
                <PanelTab>图层管理</PanelTab>
              </Tabs>
              <Table>
                <colgroup>
                  <col width="21" />
                  <col width="101" />
                  <col width="113" />
                  <col width="41" />
                </colgroup>
                <thead>
                  <tr>
                    <th />
                    <th>属性名称</th>
                    <th>属性值</th>
                    <th>附加</th>
                  </tr>
                </thead>
                <tbody>
                  {PROPS.map(([name, value, link, check], i) => (
                    <tr key={name}>
                      <th>{i + 1}</th>
                      <PropName $link={link}>{name}</PropName>
                      <td>{value}</td>
                      <td>{check && <Check type="checkbox" aria-label={name} />}</td>
                    </tr>
                  ))}
                </tbody>
              </Table>
            </Panel>
          </Side>

          <Splitter><button aria-label="collapse" /></Splitter>
          <Viewport><Scene /></Viewport>
        </Workspace>

        <Pointer width="120" height="195" viewBox="1088 50 120 195">
          <polygon points="1093,57 1107,65 1103,68 1148,145 1204,241 1201,241 1142,145 1099,72 1094,74" fill="#ff2012" />
        </Pointer>
      </Shell>
    </>
  );
}
